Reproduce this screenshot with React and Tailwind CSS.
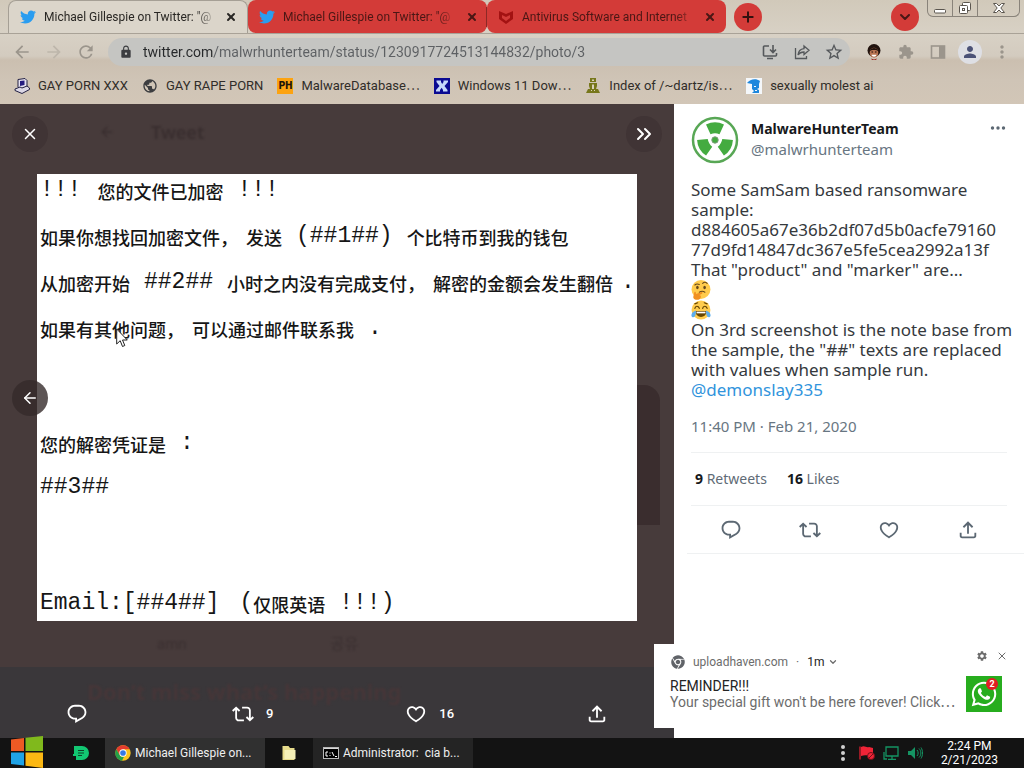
import React from "react";
import { X, ChevronDown, Plus, ArrowLeft, ChevronsRight } from "lucide-react";
import { FaTwitter, FaWhatsapp, FaChrome } from "react-icons/fa";
import {
  MdArrowBack,
  MdArrowForward,
  MdRefresh,
  MdLock,
  MdExtension,
  MdPerson,
  MdMoreVert,
  MdStarBorder,
  MdSettings,
  MdPublic,
} from "react-icons/md";

const ICONS = {
  reply:
    "M1.751 10c0-4.42 3.584-8 8.005-8h4.366c4.49 0 8.129 3.64 8.129 8.13 0 2.96-1.607 5.68-4.196 7.11l-8.054 4.46v-3.69h-.067c-4.49.1-8.183-3.51-8.183-8.01zm8.005-6c-3.317 0-6.005 2.69-6.005 6 0 3.37 2.77 6.08 6.138 6.01l.351-.01h1.761v2.3l5.087-2.81c1.951-1.08 3.163-3.13 3.163-5.36 0-3.39-2.744-6.13-6.129-6.13H9.756z",
  retweet:
    "M4.5 3.88l4.432 4.14-1.364 1.46L5.5 7.55V16c0 1.1.896 2 2 2H13v2H7.5c-2.209 0-4-1.79-4-4V7.55L1.432 9.48.068 8.02 4.5 3.88zM16.5 6H11V4h5.5c2.209 0 4 1.79 4 4v8.45l2.068-1.93 1.364 1.46-4.432 4.14-4.432-4.14 1.364-1.46 2.068 1.93V8c0-1.1-.896-2-2-2z",
  like: "M16.697 5.5c-1.222-.06-2.679.51-3.89 2.16l-.805 1.09-.806-1.09C9.984 6.01 8.526 5.44 7.304 5.5c-1.243.07-2.349.78-2.91 1.91-.552 1.12-.633 2.78.479 4.82 1.074 1.97 3.257 4.27 7.129 6.61 3.87-2.34 6.052-4.64 7.126-6.61 1.111-2.04 1.03-3.7.477-4.82-.561-1.13-1.666-1.84-2.908-1.91zm4.187 7.69c-1.351 2.48-4.001 5.12-8.379 7.67l-.503.3-.504-.3c-4.379-2.55-7.029-5.19-8.382-7.67-1.36-2.5-1.41-4.86-.514-6.67.887-1.79 2.647-2.91 4.601-3.01 1.651-.09 3.368.56 4.798 2.01 1.429-1.45 3.146-2.1 4.796-2.01 1.954.1 3.714 1.22 4.601 3.01.896 1.81.846 4.17-.514 6.67z",
  share:
    "M12 2.59l5.7 5.7-1.41 1.42L13 6.41V16h-2V6.41l-3.3 3.3-1.41-1.42L12 2.59zM21 15l-.02 3.51c0 1.38-1.12 2.49-2.5 2.49H5.5C4.11 21 3 19.88 3 18.5V15h2v3.5c0 .28.22.5.5.5h12.98c.28 0 .5-.22.5-.5L19 15h2z",
};

function TweetIcon({ name, className }) {
  return (
    <svg viewBox="0 0 24 24" fill="currentColor" className={className} aria-hidden="true">
      <path d={ICONS[name]} />
    </svg>
  );
}

function ShieldIcon() {
  return (
    <svg viewBox="0 0 16 16" className="size-4 shrink-0" aria-hidden="true">
      <path d="M1 2l7 3 7-3v8l-7 5-7-5z" fill="#a31212" />
      <path d="M4 6l4 2 4-2v3l-4 3-4-3z" fill="#d33b38" />
    </svg>
  );
}

function Tab({ title, active, divider, icon }) {
  return (
    <div
      className={
        active
          ? "flex h-[33px] w-60 items-center gap-2 rounded-t-lg border-x border-t border-[#a59f95] bg-[#dbd5ca] pr-2.5 pl-[11px] text-[#292724]"
          : "flex h-[33px] w-[239px] items-center gap-2 rounded-lg bg-[#d33b38] pr-2.5 pl-[11px] text-[#4a1715]"
      }
    >
      {icon || <FaTwitter className="size-4 shrink-0 text-[#2a9df0]" />}
      <span className="min-w-0 flex-1 mask-[linear-gradient(to_right,#000_88%,transparent)] text-xs whitespace-nowrap">
        {title}
      </span>
      <button type="button" aria-label="Close tab" className="shrink-0">
        <X className="size-3" strokeWidth={4} />
      </button>
      {divider && <span className="-mr-2.5 h-5 w-px bg-[#8d2926]" />}
    </div>
  );
}

function TabStrip() {
  return (
    <div className="flex h-[33px] items-start pl-2">
      <Tab active title={'Michael Gillespie on Twitter: "@'} />
      <Tab divider title={'Michael Gillespie on Twitter: "@'} />
      <Tab title="Antivirus Software and Internet" icon={<ShieldIcon />} />
      <button
        type="button"
        aria-label="New tab"
        className="mt-[3px] ml-2 flex size-7 items-center justify-center rounded-full bg-[#d33b38] text-[#33110f]"
      >
        <Plus className="size-4" strokeWidth={3} />
      </button>
      <button
        type="button"
        aria-label="Search tabs"
        className="mt-[3px] ml-auto flex size-7 items-center justify-center rounded-full bg-[#d33b38] text-[#4a1715]"
      >
        <ChevronDown className="size-4" strokeWidth={3} />
      </button>
      <div className="mr-1 ml-2 flex h-[17px] w-[93px] divide-x divide-[#89837a] rounded-b-md border border-t-0 border-[#89837a] text-[#5b564f]">
        <button type="button" aria-label="Minimize" className="flex w-[25px] items-center justify-center">
          <svg viewBox="0 0 14 14" className="size-3.5" fill="#fff" stroke="currentColor" aria-hidden="true">
            <rect x="1.5" y="8.500" width="11" height="3.500" rx="1" />
          </svg>
        </button>
        <button type="button" aria-label="Restore" className="flex w-[25px] items-center justify-center">
          <svg viewBox="0 0 14 14" className="size-3.5" fill="#fff" stroke="currentColor" aria-hidden="true">
            <rect x="4.500" y="1.500" width="8" height="8" rx="1" />
            <rect x="1.500" y="4.500" width="8" height="8" rx="1" />
            <rect x="4.500" y="7.500" width="2" height="2" />
          </svg>
        </button>
        <button type="button" aria-label="Close" className="flex flex-1 items-center justify-center">
          <svg viewBox="0 0 14 14" className="size-3.5" fill="#fff" stroke="currentColor" aria-hidden="true">
            <path d="M1.500 2.500h3l2.500 2.500 2.500-2.500h3L8.800 7l3.700 4.500h-3L7 9l-2.500 2.500h-3L5.200 7z" />
          </svg>
        </button>
      </div>
    </div>
  );
}

function Toolbar() {
  return (
    <div className="flex h-9 items-center border-t border-[#a9a297] px-3 text-[#9b958c]">
      <button type="button" aria-label="Back" className="mr-3">
        <MdArrowBack className="size-5" />
      </button>
      <button type="button" aria-label="Forward" className="mr-3 text-[#bdb6ab]">
        <MdArrowForward className="size-5" />
      </button>
      <button type="button" aria-label="Reload" className="mr-3">
        <MdRefresh className="size-5" />
      </button>
      <div className="flex h-7 min-w-0 flex-1 items-center rounded-full bg-[#c5c5c2] pr-1.5 pl-[11px] text-[#55585b]">
        <MdLock className="size-3.5 text-[#3c3d40]" />
        <input
          type="text"
          aria-label="Address"
          defaultValue="twitter.com/malwrhunterteam/status/1230917724513144832/photo/3"
          className="ml-2.5 min-w-0 flex-1 bg-[linear-gradient(to_right,#26282a_71px,#5d6063_71px)] bg-clip-text text-sm text-transparent outline-none"
        />
        <button type="button" aria-label="Install" className="mr-4">
          <svg viewBox="0 0 16 16" className="size-4" fill="none" stroke="currentColor" strokeWidth="1.600" aria-hidden="true">
            <path d="M7 2H2.500a1 1 0 0 0-1 1v8a1 1 0 0 0 1 1h11a1 1 0 0 0 1-1V9M5 14.500h6M11 1v7M8 5.500l3 3 3-3" />
          </svg>
        </button>
        <button type="button" aria-label="Share" className="mr-3.5">
          <svg viewBox="0 0 16 16" className="size-4" fill="none" stroke="currentColor" strokeWidth="1.300" aria-hidden="true">
            <path d="M1.500 4v10.500h11V12M10 2l5 4.300-5 4.200V8C7 8 5.300 9 4 11c.3-3.500 2.500-6 6-6.400z" />
          </svg>
        </button>
        <button type="button" aria-label="Bookmark">
          <MdStarBorder className="size-5" />
        </button>
      </div>
      <button type="button" aria-label="Extension" className="ml-4">
        <svg viewBox="0 0 16 16" className="size-4" aria-hidden="true">
          <circle cx="8" cy="6.500" r="6.500" fill="#21130e" />
          <ellipse cx="8" cy="8.800" rx="4.300" ry="5" fill="#b87452" />
          <path d="M3.500 7c2-4 7-4 9 0-2-1.500-7-1.500-9 0z" fill="#21130e" />
          <path d="M5.500 10.800h5c-.5 2.500-4.500 2.500-5 0z" fill="#fff" />
          <path d="M5.500 8h1.500M9 8h1.500" stroke="#21130e" />
          <path d="M5 14.500l3 1 3-1-1 1.500H6z" fill="#9b2c24" />
        </svg>
      </button>
      <button type="button" aria-label="Extensions" className="ml-4">
        <MdExtension className="size-4" />
      </button>
      <button type="button" aria-label="Side panel" className="ml-4">
        <svg viewBox="0 0 16 16" className="size-4" aria-hidden="true">
          <rect x="1.500" y="2" width="13" height="12" fill="none" stroke="currentColor" strokeWidth="1.600" />
          <rect x="9" y="2" width="5.500" height="12" fill="currentColor" />
        </svg>
      </button>
      <button
        type="button"
        aria-label="Profile"
        className="ml-3 flex size-6 items-center justify-center rounded-full bg-[#dedfe4] text-[#4b5277]"
      >
        <MdPerson className="size-[18px]" />
      </button>
      <button type="button" aria-label="Menu" className="ml-2.5">
        <MdMoreVert className="size-5" />
      </button>
    </div>
  );
}

const BOOKMARKS = [
  {
    label: "GAY PORN XXX",
    icon: (
      <svg viewBox="0 0 16 16" className="size-4" aria-hidden="true">
        <path d="M4 1.500L11 .5l2 2v6.500l-7 2-2-2z" fill="#e6e2f2" stroke="#222043" />
        <path d="M6 3l4.500-.5v4.500L6 8z" fill="#241c80" />
        <path d="M1 11l5-2 2 1 5-2 2.500 2v1.500L8 15.500 1 12.500z" fill="#dcd8e6" stroke="#222043" />
      </svg>
    ),
  },
  { label: "GAY RAPE PORN", icon: <MdPublic className="size-4 text-[#3c3d40]" /> },
  {
    label: "MalwareDatabase⋯",
    icon: (
      <span className="flex size-4 items-center justify-center bg-[#fca311] text-[10px] leading-none font-black text-[#1b1408]">
        PH
      </span>
    ),
  },
  {
    label: "Windows 11 Dow⋯",
    icon: (
      <svg viewBox="0 0 16 16" className="size-4" aria-hidden="true">
        <rect width="16" height="16" fill="#0a0a92" />
        <path d="M2.500 2.500h4.500v1.500l1.200 2 1.300-2V2.500H14V4l-3.500 4 3 4v1.500H9V12l-1.300-2.200L6 12v1.500H2V12l3.500-4L2.500 4z" fill="#c5d8fb" />
      </svg>
    ),
  },
  {
    label: "Index of /~dartz/is⋯",
    icon: (
      <svg viewBox="0 0 16 16" className="size-4" aria-hidden="true">
        <path d="M5 0h6v4H5zM4 5h8v3l-1 3h2l2 4H1l2-4h2L4 8z" fill="#77771b" />
        <path d="M7 1.500h2v1.500H7zM7 6.500h2v4.500H7zM6 12h1v1H6zM9 12h1v1H9z" fill="#dad1bb" />
      </svg>
    ),
  },
  {
    label: "sexually molest ai",
    icon: (
      <svg viewBox="0 0 16 16" className="size-4" aria-hidden="true">
        <rect width="16" height="16" fill="#f4f7fa" />
        <path d="M1 5c3-4 9-5 13-2l-1 3H6zM6 6h7v4l-2 1 2 1v3H6l2-2-2-2z" fill="#1d87dd" />
        <path d="M8 8h2v1H8zM9 12h2v1H9z" fill="#f4f7fa" />
      </svg>
    ),
  },
];

function BookmarkBar() {
  return (
    <nav className="flex h-[35px] items-center gap-3.5 pb-px pl-3.5 text-[13px] text-[#302d29]">
      {BOOKMARKS.map((b) => (
        <a key={b.label} href="#" className="flex items-center gap-2 whitespace-nowrap">
          {b.icon}
          {b.label}
        </a>
      ))}
    </nav>
  );
}

const NOTE = [
  { row: "h-[30px]", parts: [["!!!", "m", ""], ["您的文件已加密", "c", "ml-4"], ["!!!", "m", "ml-3.5"]] },
  { row: "mt-2 h-[46px]", parts: [["如果你想找回加密文件，", "c", ""], ["发送", "c", "ml-2"], ["(##1##)", "m", "ml-3.5"], ["个比特币到我的钱包", "c", "ml-3.5"]] },
  { row: "h-[46px]", parts: [["从加密开始", "c", ""], ["##2##", "m", "ml-3.5"], ["小时之内没有完成支付，", "c", "ml-3.5"], ["解密的金额会发生翻倍", "c", "ml-2"], [".", "m", "ml-2"]] },
  { row: "h-[46px]", parts: [["如果有其他问题，", "c", ""], ["可以通过邮件联系我", "c", "ml-2"], [".", "m", "ml-3.5"]] },
  { row: "mt-[69px] h-[46px]", parts: [["您的解密凭证是", "c", ""], [":", "m", "ml-3.5"]] },
  { row: "h-[42px]", parts: [["##3##", "m", ""]] },
  { row: "mt-[76px] h-[38px]", parts: [["Email:[##4##]", "m", ""], ["(", "m", "ml-5"], ["仅限英语", "c", ""], ["!!!)", "m", "ml-3.5"]] },
];

function NoteImage() {
  return (
    <div className="flex-1 overflow-hidden bg-white pl-[3px] whitespace-nowrap text-[#161616]">
      {NOTE.map((line, i) => (
        <p key={i} className={"flex items-center " + line.row}>
          {line.parts.map(([text, kind, gap], j) => (
            <span
              key={j}
              className={
                (kind === "m"
                  ? "pt-0.5 font-['Liberation_Mono',monospace] text-[23px] leading-7 "
                  : "pt-1 font-['Noto_Sans_CJK_SC',sans-serif] text-lg leading-6 font-medium ") + gap
              }
            >
              {text}
            </span>
          ))}
        </p>
      ))}
    </div>
  );
}

function PhotoViewer() {
  return (
    <section className="relative flex min-w-0 flex-1 flex-col bg-[#473b3b] text-white">
      <div
        aria-hidden="true"
        className="absolute top-[281px] right-3.5 h-[140px] w-10 rounded-tr-2xl bg-[#3a2d2e]"
      />
      <div className="relative flex h-[70px] items-center justify-between px-3 pb-2.5">
        <button
          type="button"
          aria-label="Close photo"
          className="flex size-9 items-center justify-center rounded-full bg-[#403435]"
        >
          <X className="size-[18px]" strokeWidth={2} />
        </button>
        <span
          className="mr-auto flex items-center gap-9 pb-1 pl-[51px] font-['Noto_Sans',sans-serif] text-lg font-semibold text-[#392e2f] blur-[1px]"
          aria-hidden="true"
        >
          <ArrowLeft className="size-4" />
          Tweet
        </span>
        <button
          type="button"
          aria-label="Hide tweet"
          className="flex size-9 items-center justify-center rounded-full bg-[#403435]"
        >
          <ChevronsRight className="size-6" strokeWidth={2} />
        </button>
      </div>
      <div className="relative flex flex-1 flex-col px-[37px]">
        <NoteImage />
        <button
          type="button"
          aria-label="Previous photo"
          className="absolute top-1/2 left-3 flex size-9 -translate-y-1/2 items-center justify-center rounded-full bg-[#342a2a]/80"
        >
          <ArrowLeft className="size-[18px]" strokeWidth={2} />
        </button>
        <svg viewBox="0 0 12 20" className="absolute top-[154px] left-[116px] h-5 w-3" aria-hidden="true">
          <path d="M.7 1v15l3.500-3.300L6.500 18.500l2.300-1-2.300-5.500h4.800z" fill="#fff" stroke="#222" strokeWidth="1" />
        </svg>
      </div>
      <div className="flex h-[46px] items-center gap-36 pl-[157px] text-[15px] text-[#3b3031] blur-[1px]" aria-hidden="true">
        <span>amn</span>
        <span>공유</span>
      </div>
      <footer className="relative h-[71px] bg-[#3a373a]">
        <div
          className="absolute top-2 left-[87px] font-['Noto_Sans',sans-serif] text-[22px] leading-8 font-bold text-[#463638] blur-[1px]"
          aria-hidden="true"
        >
          Don’t miss what’s happening
        </div>
        <div className="relative flex justify-between px-[66px] pt-9 text-[13px] font-medium">
          <button type="button" aria-label="Reply" className="pr-3">
            <TweetIcon name="reply" className="size-[22px]" />
          </button>
          <button type="button" aria-label="Retweet" className="flex items-center gap-3">
            <TweetIcon name="retweet" className="size-[22px]" />9
          </button>
          <button type="button" aria-label="Like" className="flex items-center gap-3">
            <TweetIcon name="like" className="size-[22px]" />
            16
          </button>
          <button type="button" aria-label="Share">
            <TweetIcon name="share" className="size-[22px]" />
          </button>
        </div>
      </footer>
    </section>
  );
}

function Avatar() {
  const blade = "M19.500 18.200 L15 8.500 Q24 4 33 8.500 L28.500 18.200 Q24 16.500 19.500 18.200z";
  return (
    <svg viewBox="0 0 48 48" className="size-12 shrink-0" role="img" aria-label="MalwareHunterTeam">
      <circle cx="24" cy="24" r="22" fill="#fff" stroke="#58a755" strokeWidth="2.500" />
      <g fill="#44ab40">
        <path d={blade} />
        <path d={blade} transform="rotate(120 24 24)" />
        <path d={blade} transform="rotate(240 24 24)" />
        <circle cx="24" cy="24" r="3.200" stroke="#7c9c7b" strokeWidth="1" />
      </g>
    </svg>
  );
}

function ThinkingEmoji() {
  return (
    <svg viewBox="0 0 36 36" className="size-5" role="img" aria-label="Thinking face">
      <circle cx="18" cy="17" r="17" fill="#ffcb4c" />
      <ellipse cx="11.500" cy="13.500" rx="2.300" ry="3" fill="#65471b" />
      <ellipse cx="24.500" cy="13.500" rx="2.300" ry="3" fill="#65471b" />
      <path d="M7 9c2-2 5-2 8-1M21 6c3-3 6-2 8 0M15 22c3-2 7-2 10 0" fill="none" stroke="#65471b" strokeWidth="2" strokeLinecap="round" />
      <path d="M6 22c2-2 3 0 3 3l9-3c3-1 4 2 1 3l-4 2c3 0 4 4 1 7-4 3-11 2-12-3z" fill="#f19020" />
    </svg>
  );
}

function JoyEmoji() {
  return (
    <svg viewBox="0 0 36 36" className="size-5" role="img" aria-label="Face with tears of joy">
      <circle cx="18" cy="18" r="17" fill="#ffcc4d" />
      <path d="M8 20h20c0 14-20 14-20 0z" fill="#664500" />
      <path d="M10 21h16v3H10z" fill="#fff" />
      <path d="M7 15c1-5 6-5 8 0M21 15c1-5 6-5 8 0M7 7l5-2M29 7l-5-2" fill="none" stroke="#664500" strokeWidth="2.200" strokeLinecap="round" />
      <path d="M9 19c0 9-2 13-6 12-4-2-3-9 6-12zM27 19c0 9 2 13 6 12 4-2 3-9-6-12z" fill="#5dadec" />
    </svg>
  );
}

function TweetPanel() {
  return (
    <article className="w-[350px] shrink-0 bg-white pt-3 font-['Noto_Sans',sans-serif] text-[#35393d]">
      <header className="flex gap-3 px-[17px]">
        <Avatar />
        <div className="min-w-0 flex-1 pt-[3px] text-[15px] leading-5">
          <p className="text-sm leading-5 font-bold text-[#17191c]">MalwareHunterTeam</p>
          <p className="text-[#687682]">@malwrhunterteam</p>
        </div>
        <button type="button" aria-label="More" className="h-6 text-[#5c6873]">
          <svg viewBox="0 0 18 18" className="size-[18px]" fill="currentColor" aria-hidden="true">
            <circle cx="3.500" cy="9" r="1.700" />
            <circle cx="9" cy="9" r="1.700" />
            <circle cx="14.500" cy="9" r="1.700" />
          </svg>
        </button>
      </header>
      <div className="mt-4 pl-[17px] text-[17px] leading-5 whitespace-nowrap">
        <p>
          Some SamSam based ransomware
          <br />
          sample:
          <br />
          d884605a67e36b2df07d5b0acfe79160
          <br />
          77d9fd14847dc367e5fe5cea2992a13f
          <br />
          That "product" and "marker" are...
        </p>
        <ThinkingEmoji />
        <JoyEmoji />
        <p>
          On 3rd screenshot is the note base from
          <br />
          the sample, the "##" texts are replaced
          <br />
          with values when sample run.
          <br />
          <a href="#" className="text-[#3194dc]">
            @demonslay335
          </a>
        </p>
      </div>
      <p className="mx-[17px] mt-4 border-b border-[#eff1f2] pb-4 text-[15px] leading-5 text-[#687682]">11:40 PM · Feb 21, 2020</p>
      <div className="mx-[17px] flex h-[53px] items-center gap-5 border-b border-[#eff1f2] px-1 text-sm text-[#5f6b76]">
        <span>
          <b className="text-[#17191c]">9</b> Retweets
        </span>
        <span>
          <b className="text-[#17191c]">16</b> Likes
        </span>
      </div>
      <div className="ml-[13px] border-b border-[#eff1f2]">
        <div className="mr-4 ml-1 grid h-[47px] grid-cols-4 items-center justify-items-center text-[#5c6873]">
          {["reply", "retweet", "like", "share"].map((n) => (
            <button key={n} type="button" aria-label={n}>
              <TweetIcon name={n} className="size-[22px]" />
            </button>
          ))}
        </div>
      </div>
    </article>
  );
}

function Notification() {
  return (
    <aside className="absolute right-0 bottom-2.5 h-[84px] w-[370px] bg-white pr-4 pl-4 text-sm text-[#6c6c6c]">
      <div className="flex h-[26px] items-start justify-between">
        <div className="flex items-center gap-2 pt-2.5 pl-px text-xs leading-4">
          <FaChrome className="size-3.5 text-[#606368]" />
          <span>uploadhaven.com</span>
          <span>·</span>
          <span className="text-[#242424]">1m</span>
          <ChevronDown className="-ml-1 size-2.5" strokeWidth={3} />
        </div>
        <div className="flex gap-2 pt-1.5">
          <button type="button" aria-label="Notification settings">
            <MdSettings className="size-3" />
          </button>
          <button type="button" aria-label="Dismiss">
            <X className="size-3" strokeWidth={2} />
          </button>
        </div>
      </div>
      <div className="flex items-start justify-between">
        <div className="min-w-0 pt-2 leading-4 whitespace-nowrap">
          <p className="text-[#242424]">REMINDER!!!</p>
          <p>Your special gift won't be here forever! Click⋯</p>
        </div>
        <div className="relative mt-1.5 mr-1.5 flex size-9 shrink-0 items-center justify-center bg-[#27ad1e] text-white">
          <FaWhatsapp className="size-7" />
          <span className="absolute top-0.5 right-1 flex size-3 items-center justify-center rounded-full bg-[#e11d24] text-[9px] leading-none font-bold">
            2
          </span>
        </div>
      </div>
    </aside>
  );
}

function ChromeLogo() {
  return (
    <svg viewBox="0 0 48 48" className="size-4 shrink-0" aria-hidden="true">
      <circle cx="24" cy="24" r="23" fill="#fbc31b" />
      <path d="M4 12.500A23 23 0 0 1 44 12.500H24L14 30z" fill="#e33b2e" />
      <path d="M4 12.500l10 17.500c3 6 9 6 13 5l-6 12A23 23 0 0 1 4 12.500z" fill="#23a049" />
      <circle cx="24" cy="24" r="11" fill="#fff" />
      <circle cx="24" cy="24" r="8.500" fill="#3578e5" />
    </svg>
  );
}

function Taskbar() {
  return (
    <footer className="relative flex h-[30px] items-stretch bg-[#131313] text-xs text-[#efefef]">
      <button type="button" aria-label="Start" className="-mt-1 flex w-[57px] items-end pl-2.5">
        <svg viewBox="0 0 34 33" className="h-[33px] w-[34px]" aria-hidden="true">
          <path d="M1 4.500L14 3v13H1z" fill="#ee5a24" />
          <path d="M15.500 2.800L33 1v15H15.500z" fill="#80b91c" />
          <path d="M1 17.500h13v13L1 29z" fill="#20a3e6" />
          <path d="M15.500 17.500H33V33l-17.500-2.300z" fill="#fcb813" />
        </svg>
      </button>
      <button type="button" aria-label="Document app" className="flex w-12 items-center justify-center">
        <svg viewBox="0 0 16 14" className="h-3.5 w-4" aria-hidden="true">
          <path d="M1 0h8a7 7 0 0 1 0 14H3V10H0V8h1z" fill="#12c772" />
          <path d="M5 4.500h6M5 7h6M5 9.500h4" stroke="#0b4429" />
        </svg>
      </button>
      <button type="button" className="flex w-40 items-center gap-1 bg-[#303030] pl-2.5">
        <ChromeLogo />
        Michael Gillespie on...
      </button>
      <button type="button" aria-label="File Explorer" className="flex w-12 items-center justify-center">
        <svg viewBox="0 0 15 14" className="h-3.5 w-4" aria-hidden="true">
          <path d="M1 0h6l1.500 2H13v12H1z" fill="#e7dc8c" />
          <path d="M3 4h11v9H3z" fill="#f5f0b8" />
        </svg>
      </button>
      <button type="button" className="flex w-40 items-center gap-1 bg-[#242424] pl-2.5">
        <svg viewBox="0 0 16 12" className="h-3 w-4 shrink-0" aria-hidden="true">
          <rect x=".5" y=".5" width="15" height="11" fill="#000" stroke="#b8b8b8" />
          <path d="M1 1.500h14" stroke="#d8d8d8" />
          <path d="M5 5H3v4h2M7 5.500v1M7 8v1M9 5l2 4M12 9.500h2" fill="none" stroke="#fff" />
        </svg>
        <span className="whitespace-pre">Administrator:  cia b...</span>
      </button>
      <div className="ml-auto flex items-center gap-2 pr-[26px] text-[#159463]">
        <svg viewBox="0 0 4 16" className="h-4 w-1" fill="#d0d0d0" aria-hidden="true">
          <circle cx="2" cy="2" r="2" />
          <circle cx="2" cy="8" r="2" />
          <circle cx="2" cy="14" r="2" />
        </svg>
        <svg viewBox="0 0 16 16" className="ml-1.5 size-4" aria-hidden="true">
          <path d="M1 1.500v13" stroke="#c41e2c" strokeWidth="1.500" />
          <path d="M2 2c4-2 5 1 8 0l4 1v7c-4 2-6-1-12 1z" fill="#ef2437" />
          <circle cx="12" cy="11" r="3.500" fill="#ef2437" stroke="#701019" />
          <path d="M10 13l4-4" stroke="#701019" />
        </svg>
        <svg viewBox="0 0 16 16" className="size-4" fill="none" stroke="currentColor" strokeWidth="1.300" aria-hidden="true">
          <path d="M3 2h12v9H3zM9 11v3M5 14.300h8M1 7v7h3" />
        </svg>
        <svg viewBox="0 0 16 16" className="size-4" aria-hidden="true">
          <path d="M1 6h3l4-4v12l-4-4H1z" fill="currentColor" />
          <path d="M10 5c1.500 1.500 1.500 4.500 0 6M12 3.500c2.500 2.500 2.500 6.500 0 9M14 2.500c2 3 2 8 0 11" fill="none" stroke="currentColor" />
        </svg>
        <p className="ml-2.5 text-center text-xs leading-[14px] text-white">
          2:24 PM
          <br />
          2/21/2023
        </p>
      </div>
    </footer>
  );
}

export default function App() {
  return (
    <div className="flex min-h-screen flex-col bg-white font-[Roboto,'Noto_Sans_CJK_KR',sans-serif]">
      <header className="bg-[linear-gradient(to_bottom,#d1c9ba,#d8d1c5_34px,#d3cbbf_56px,#cbbfb0_60px,#cfc4b6_80px,#d2c6b7)]">
        <TabStrip />
        <Toolbar />
        <BookmarkBar />
      </header>
      <main className="relative flex flex-1">
        <PhotoViewer />
        <TweetPanel />
        <Notification />
      </main>
      <Taskbar />
    </div>
  );
}
